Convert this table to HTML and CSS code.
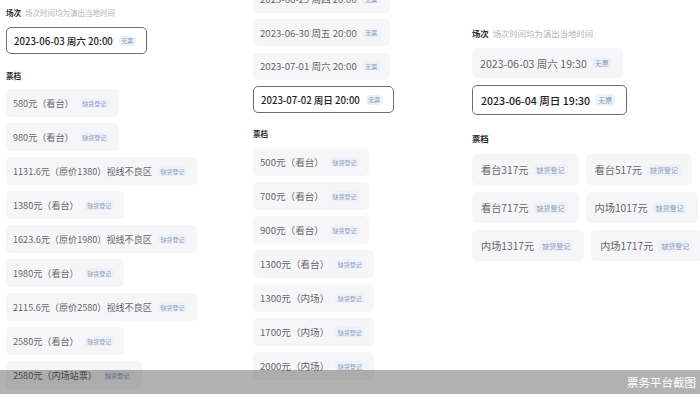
FILE: index.html
```html
<!DOCTYPE html>
<html lang="zh-CN">
<head>
<meta charset="utf-8">
<title>票档</title>
<link rel="stylesheet" href="styles.css">
</head>
<body>
<div class="page">
  <section class="col col-a">
    <div class="label"><b>场次</b><span class="hint">场次时间均为演出当地时间</span></div>
    <div class="sessions">
      <div class="session selected">2023-06-03 周六 20:00<span class="tag">无票</span></div>
    </div>
    <div class="label label-tickets"><b>票档</b></div>
    <div class="tickets">
      <div class="ticket">580元（看台）<span class="tag">缺货登记</span></div>
      <div class="ticket">980元（看台）<span class="tag">缺货登记</span></div>
      <div class="ticket">1131.6元（原价1380）视线不良区<span class="tag">缺货登记</span></div>
      <div class="ticket">1380元（看台）<span class="tag">缺货登记</span></div>
      <div class="ticket">1623.6元（原价1980）视线不良区<span class="tag">缺货登记</span></div>
      <div class="ticket">1980元（看台）<span class="tag">缺货登记</span></div>
      <div class="ticket">2115.6元（原价2580）视线不良区<span class="tag">缺货登记</span></div>
      <div class="ticket">2580元（看台）<span class="tag">缺货登记</span></div>
      <div class="ticket">2580元（内场站票）<span class="tag">缺货登记</span></div>
    </div>
  </section>

  <section class="col col-b">
    <div class="sessions">
      <div class="session">2023-06-29 周四 20:00<span class="tag">无票</span></div>
      <div class="session">2023-06-30 周五 20:00<span class="tag">无票</span></div>
      <div class="session">2023-07-01 周六 20:00<span class="tag">无票</span></div>
      <div class="session selected">2023-07-02 周日 20:00<span class="tag">无票</span></div>
    </div>
    <div class="label label-tickets"><b>票档</b></div>
    <div class="tickets">
      <div class="ticket">500元（看台）<span class="tag">缺货登记</span></div>
      <div class="ticket">700元（看台）<span class="tag">缺货登记</span></div>
      <div class="ticket">900元（看台）<span class="tag">缺货登记</span></div>
      <div class="ticket">1300元（看台）<span class="tag">缺货登记</span></div>
      <div class="ticket">1300元（内场）<span class="tag">缺货登记</span></div>
      <div class="ticket">1700元（内场）<span class="tag">缺货登记</span></div>
      <div class="ticket">2000元（内场）<span class="tag">缺货登记</span></div>
    </div>
  </section>

  <section class="col col-c">
    <div class="label"><b>场次</b><span class="hint">场次时间均为演出当地时间</span></div>
    <div class="sessions">
      <div class="session">2023-06-03 周六 19:30<span class="tag">无票</span></div>
      <div class="session selected">2023-06-04 周日 19:30<span class="tag">无票</span></div>
    </div>
    <div class="label label-tickets"><b>票档</b></div>
    <div class="tickets">
      <div class="tk-row">
        <div class="ticket">看台317元<span class="tag">缺货登记</span></div>
        <div class="ticket">看台517元<span class="tag">缺货登记</span></div>
      </div>
      <div class="tk-row">
        <div class="ticket">看台717元<span class="tag">缺货登记</span></div>
        <div class="ticket">内场1017元<span class="tag">缺货登记</span></div>
      </div>
      <div class="tk-row">
        <div class="ticket">内场1317元<span class="tag">缺货登记</span></div>
        <div class="ticket">内场1717元<span class="tag">缺货登记</span></div>
      </div>
    </div>
  </section>
</div>
<div class="caption">票务平台截图</div>
</body>
</html>
```

FILE: styles.css
```css
html, body {
  margin: 0;
  padding: 0;
  height: 394px;
  overflow: hidden;
  background: #ffffff;
}
body {
  font-family: "Noto Sans CJK SC", "Noto Sans", sans-serif;
  color: #333;
}
.page {
  display: grid;
  grid-template-columns: 247px 219px 228px;
  padding-left: 6px;
  align-items: start;
}
.col {
  display: flex;
  flex-direction: column;
  align-items: flex-start;
}
.label {
  height: 10px;
  line-height: 10px;
  font-size: 7.5px;
  white-space: nowrap;
}
.label b {
  font-weight: 700;
  color: #2a2a2a;
}
.hint {
  color: #b4b4b4;
  margin-left: 4px;
}
.sessions, .tickets {
  display: flex;
  flex-direction: column;
  align-items: flex-start;
}
.session, .ticket {
  display: flex;
  align-items: center;
  box-sizing: border-box;
  background: #f6f6f8;
  border-radius: 5px;
  white-space: nowrap;
  color: #666666;
}
.session.selected {
  background: #ffffff;
  border: 1px solid #6e6e6e;
  color: #1e1e1e;
  font-weight: 500;
}
.tag {
  display: inline-flex;
  align-items: center;
  background: #edf1f9;
  color: #8e9cb8;
  border-radius: 4px;
  font-weight: 400;
}

/* Column A and B (smaller scale) */
.col-a, .col-b {
  font-size: 9.6px;
}
.col-a .session, .col-b .session {
  height: 27px;
  padding: 0 10px 0 7px;
}
.col-a .ticket, .col-b .ticket {
  height: 28px;
  padding: 0 10px 0 7px;
}
.col-a .ticket {
  font-size: 9.1px;
}
.col-a .tag, .col-b .tag {
  font-size: 6px;
  height: 10px;
  padding: 0 2.5px;
  margin-left: 6px;
}
.col-a .tickets, .col-b .tickets {
  gap: 6px;
}

.col-a {
  padding-top: 8px;
}
.col-a .sessions {
  margin-top: 9px;
}
.col-a .label-tickets {
  margin-top: 17px;
}
.col-a .tickets {
  margin-top: 8px;
}

.col-b .sessions {
  margin-top: -14.5px;
  gap: 6.5px;
}
.col-b .label-tickets {
  margin-top: 16px;
}
.col-b .tickets {
  margin-top: 9px;
}

/* Column C (larger scale) */
.col-c {
  padding-top: 28px;
  font-size: 10.6px;
}
.col-c .label {
  font-size: 8.4px;
}
.col-c .sessions {
  margin-top: 10px;
  gap: 7px;
}
.col-c .session {
  height: 30px;
  padding: 0 11px 0 8px;
}
.col-c .label-tickets {
  margin-top: 18px;
}
.col-c .tickets {
  margin-top: 11px;
  gap: 7px;
}
.tk-row {
  display: flex;
  gap: 7px;
}
.col-c .ticket {
  height: 31px;
  padding: 0 11px 0 9px;
  font-size: 10.2px;
}
.col-c .tag {
  font-size: 7px;
  height: 12px;
  padding: 0 3px;
  margin-left: 5px;
}

.caption {
  position: absolute;
  left: 0;
  right: 0;
  bottom: 0;
  height: 24px;
  background: rgba(0, 0, 0, 0.3);
  color: #ffffff;
  font-size: 11.5px;
  line-height: 24px;
  text-align: right;
  padding-right: 4px;
}
```
